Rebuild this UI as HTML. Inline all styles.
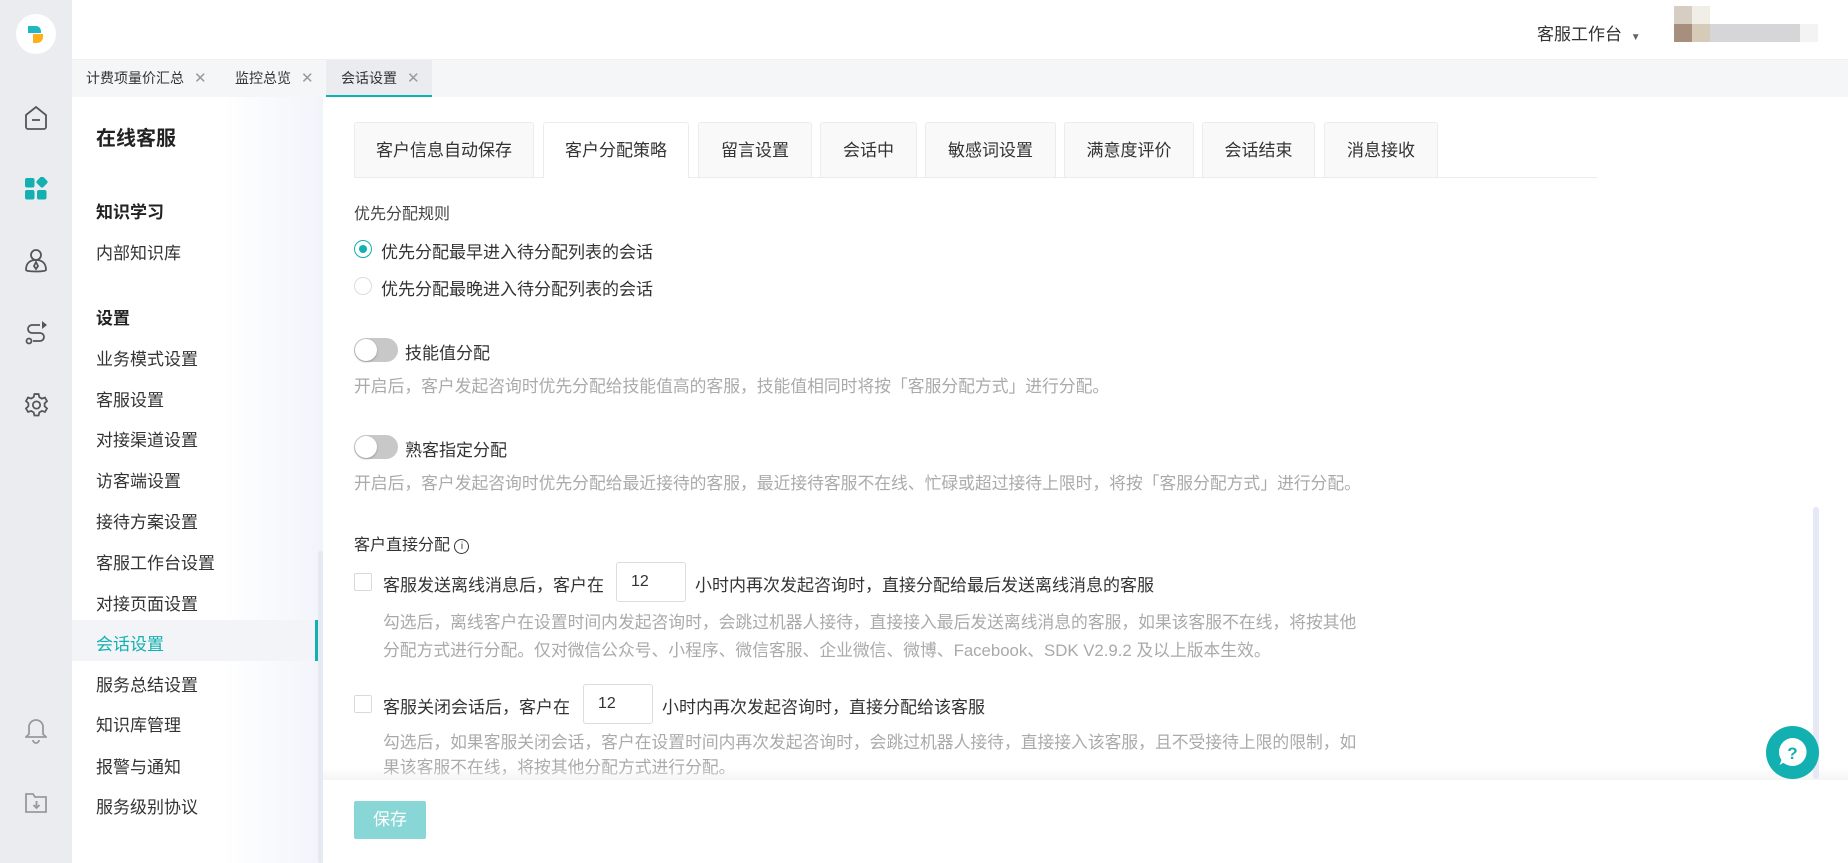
<!DOCTYPE html>
<html><head><meta charset="utf-8"><style>
*{margin:0;padding:0;box-sizing:border-box}
body{width:1848px;height:863px;overflow:hidden;position:relative;background:#fff;font-family:"Liberation Sans","Noto Sans CJK SC",sans-serif;color:#333;font-size:17px}
.abs{position:absolute}
.side{left:0;top:0;width:72px;height:863px;background:#ebecf0}
.logo{left:16px;top:14px;width:40px;height:40px;border-radius:50%;background:#fff}
.hdr{left:72px;top:0;width:1776px;height:60px;background:#fff;border-bottom:1px solid #eee}
.tabbar{left:72px;top:60px;width:1776px;height:37px;background:#f5f6f8}
.tb{position:absolute;top:0;height:37px;line-height:37px;font-size:14px;color:#333}
.tb .x{color:#999;margin-left:10px;font-size:15px}
.nav{left:72px;top:97px;width:251px;height:766px;background:linear-gradient(90deg,#fff 60%,#f2f4fb)}
.ni{position:absolute;left:24px;font-size:17px;color:#333;white-space:nowrap}
.nh{font-weight:bold;color:#222}
.ctab{position:absolute;top:122px;height:55px;line-height:55px;text-align:center;background:#f9f9f9;border:1px solid #ececec;border-bottom:none;border-radius:3px 3px 0 0;font-size:17px;color:#333}
.t{position:absolute;white-space:nowrap;font-size:17px}
.desc{color:#aaa;font-size:16.8px}
.tog{position:absolute;width:44px;height:24px;border-radius:12px;background:#c8c8c8}
.tog:after{content:"";position:absolute;left:1px;top:1px;width:22px;height:22px;border-radius:50%;background:#fff;box-shadow:0 1px 2px rgba(0,0,0,.25)}
.cb{position:absolute;width:18px;height:18px;border:1px solid #d9d9d9;border-radius:2px;background:#fff}
.inp{position:absolute;width:70px;height:40px;border:1px solid #dcdcdc;border-radius:3px;line-height:38px;padding-left:14px;font-size:16px}
</style></head><body>
<div class="abs side"></div>
<div class="abs logo"><svg width="40" height="40" viewBox="0 0 40 40"><path d="M12 12 h8 a5 5 0 0 1 5 5 v2 h-13z" fill="#1fb8c0"/><path d="M17 20 h10 v3 a6 6 0 0 1 -6 6 h-4z" fill="#fdb01a"/></svg></div>
<svg class="abs" style="left:24px;top:105px" width="24" height="26" viewBox="0 0 24 26" fill="none" stroke="#555" stroke-width="1.8"><path d="M2 10 L12 2 L22 10 V22 a2 2 0 0 1 -2 2 H4 a2 2 0 0 1 -2 -2z"/><path d="M8 15 h8"/></svg>
<svg class="abs" style="left:24px;top:177px" width="25" height="24" viewBox="0 0 25 24" fill="#12b0b0"><rect x="1" y="1" width="9.5" height="9.5" rx="2"/><rect x="13.5" y="0.5" width="9" height="9" rx="2" transform="rotate(45 18 5)"/><rect x="1" y="13" width="9.5" height="9.5" rx="2"/><rect x="13" y="13" width="9.5" height="9.5" rx="2"/></svg>
<svg class="abs" style="left:24px;top:248px" width="24" height="26" viewBox="0 0 24 26" fill="none" stroke="#555" stroke-width="1.8"><circle cx="12" cy="7" r="5"/><path d="M2 22 c0-7 4-10 10-10 s10 3 10 10 c0 2-20 2-20 0z"/><path d="M12 14 l-2 4 2 3 2-3z"/></svg>
<svg class="abs" style="left:24px;top:320px" width="24" height="26" viewBox="0 0 24 26" fill="none" stroke="#555" stroke-width="1.8"><path d="M16 5 H8 a4 4 0 0 0 0 8 h8 a4 4 0 0 1 0 8 H9"/><circle cx="5" cy="21" r="2.5"/><path d="M18 1 l5 4 -5 4z" fill="#555" stroke="none"/></svg>
<svg class="abs" style="left:24px;top:392px" width="25" height="26" viewBox="0 0 24 24" fill="none" stroke="#555" stroke-width="1.7"><circle cx="12" cy="12" r="3.5"/><path d="M10 1.5h4l.7 3 2.4 1.4 3-1 2 3.4-2.3 2.1v2.8l2.3 2.1-2 3.4-3-1-2.4 1.4-.7 3h-4l-.7-3-2.4-1.4-3 1-2-3.4 2.3-2.1V10.3L1.9 8.2l2-3.4 3 1 2.4-1.4z"/></svg>
<svg class="abs" style="left:25px;top:718px" width="22" height="26" viewBox="0 0 22 26" fill="none" stroke="#999" stroke-width="1.8"><path d="M11 2 a7 7 0 0 1 7 7 v7 l3 3 H1 l3-3 V9 a7 7 0 0 1 7-7z"/><path d="M8 22 a3 3 0 0 0 6 0"/></svg>
<svg class="abs" style="left:25px;top:792px" width="23" height="22" viewBox="0 0 23 22" fill="none" stroke="#999" stroke-width="1.8"><path d="M1 2 h7 l2 3 h11 v15 H1z"/><path d="M11.5 9 v7 M8.5 13 l3 3 3-3"/></svg>
<div class="abs hdr"></div>
<div class="t" style="left:1537px;top:20px;font-size:17px;color:#333">客服工作台 <span style="font-size:10px;color:#666;margin-left:4px">▼</span></div>
<div class="abs" style="left:1674px;top:6px;width:18px;height:18px;background:#d6cec2"></div>
<div class="abs" style="left:1692px;top:6px;width:18px;height:18px;background:#f1eee8"></div>
<div class="abs" style="left:1674px;top:24px;width:18px;height:18px;background:#a68f7c"></div>
<div class="abs" style="left:1692px;top:24px;width:18px;height:18px;background:#d6cbb8"></div>
<div class="abs" style="left:1710px;top:24px;width:90px;height:18px;background:#d6d6d8"></div>
<div class="abs" style="left:1800px;top:24px;width:18px;height:18px;background:#f3f3f3"></div>
<div class="abs tabbar"></div>
<div class="tb" style="left:86px;top:60px">计费项量价汇总<span class="x">✕</span></div>
<div class="tb" style="left:235px;top:60px">监控总览<span class="x">✕</span></div>
<div class="abs" style="left:326px;top:60px;width:106px;height:37px;background:#eaecf0;border-bottom:2px solid #12b0b0"></div>
<div class="tb" style="left:341px;top:60px">会话设置<span class="x">✕</span></div>
<div class="abs nav"></div>
<div class="abs" style="left:72px;top:620px;width:246px;height:41px;background:#f3f4f7;border-right:3px solid #12b0b0"></div>
<div class="abs" style="left:318px;top:551px;width:5px;height:312px;background:#e5e9f2;border-radius:2px"></div>
<div class="ni nh" style="left:96px;top:122px;font-size:20px">在线客服</div>
<div class="ni nh" style="left:96px;top:198px">知识学习</div>
<div class="ni" style="left:96px;top:239px">内部知识库</div>
<div class="ni nh" style="left:96px;top:304px">设置</div>
<div class="ni" style="left:96px;top:345px">业务模式设置</div>
<div class="ni" style="left:96px;top:386px">客服设置</div>
<div class="ni" style="left:96px;top:426px">对接渠道设置</div>
<div class="ni" style="left:96px;top:467px">访客端设置</div>
<div class="ni" style="left:96px;top:508px">接待方案设置</div>
<div class="ni" style="left:96px;top:549px">客服工作台设置</div>
<div class="ni" style="left:96px;top:590px">对接页面设置</div>
<div class="ni" style="left:96px;top:630px;color:#12b0b0">会话设置</div>
<div class="ni" style="left:96px;top:671px">服务总结设置</div>
<div class="ni" style="left:96px;top:711px">知识库管理</div>
<div class="ni" style="left:96px;top:753px">报警与通知</div>
<div class="ni" style="left:96px;top:793px">服务级别协议</div>
<div class="abs" style="left:354px;top:177px;width:1243px;height:1px;background:#ececec"></div>
<div class="ctab" style="left:354px;width:180px">客户信息自动保存</div>
<div class="ctab" style="left:543px;width:146px;background:#fff;height:56px">客户分配策略</div>
<div class="ctab" style="left:698px;width:114px">留言设置</div>
<div class="ctab" style="left:820px;width:97px">会话中</div>
<div class="ctab" style="left:925px;width:131px">敏感词设置</div>
<div class="ctab" style="left:1064px;width:130px">满意度评价</div>
<div class="ctab" style="left:1202px;width:113px">会话结束</div>
<div class="ctab" style="left:1324px;width:114px">消息接收</div>
<div class="t" style="left:354px;top:200px;font-size:16px;color:#444">优先分配规则</div>
<div class="abs" style="left:354px;top:240px;width:18px;height:18px;border:1px solid #12b0b0;border-radius:50%"><div style="position:absolute;left:4px;top:4px;width:8px;height:8px;border-radius:50%;background:#12b0b0"></div></div>
<div class="t" style="left:381px;top:238px">优先分配最早进入待分配列表的会话</div>
<div class="abs" style="left:354px;top:277px;width:18px;height:18px;border:1px solid #ddd;border-radius:50%"></div>
<div class="t" style="left:381px;top:275px">优先分配最晚进入待分配列表的会话</div>
<div class="tog" style="left:354px;top:338px"></div>
<div class="t" style="left:405px;top:339px">技能值分配</div>
<div class="t desc" style="left:354px;top:373px">开启后，客户发起咨询时优先分配给技能值高的客服，技能值相同时将按「客服分配方式」进行分配。</div>
<div class="tog" style="left:354px;top:435px"></div>
<div class="t" style="left:405px;top:436px">熟客指定分配</div>
<div class="t desc" style="left:354px;top:470px">开启后，客户发起咨询时优先分配给最近接待的客服，最近接待客服不在线、忙碌或超过接待上限时，将按「客服分配方式」进行分配。</div>
<div class="t" style="left:354px;top:531px;font-size:16px;color:#333">客户直接分配 <span style="display:inline-block;width:15px;height:15px;border:1px solid #333;border-radius:50%;font-size:10px;line-height:13px;text-align:center;vertical-align:1px">i</span></div>
<div class="cb" style="left:354px;top:573px"></div>
<div class="t" style="left:383px;top:571px">客服发送离线消息后，客户在</div>
<div class="inp" style="left:616px;top:562px">12</div>
<div class="t" style="left:695px;top:571px">小时内再次发起咨询时，直接分配给最后发送离线消息的客服</div>
<div class="t desc" style="left:383px;top:609px">勾选后，离线客户在设置时间内发起咨询时，会跳过机器人接待，直接接入最后发送离线消息的客服，如果该客服不在线，将按其他</div>
<div class="t desc" style="left:383px;top:637px">分配方式进行分配。仅对微信公众号、小程序、微信客服、企业微信、微博、Facebook、SDK V2.9.2 及以上版本生效。</div>
<div class="cb" style="left:354px;top:695px"></div>
<div class="t" style="left:383px;top:693px">客服关闭会话后，客户在</div>
<div class="inp" style="left:583px;top:684px">12</div>
<div class="t" style="left:662px;top:693px">小时内再次发起咨询时，直接分配给该客服</div>
<div class="t desc" style="left:383px;top:729px">勾选后，如果客服关闭会话，客户在设置时间内再次发起咨询时，会跳过机器人接待，直接接入该客服，且不受接待上限的限制，如</div>
<div class="t desc" style="left:383px;top:754px">果该客服不在线，将按其他分配方式进行分配。</div>
<div class="abs" style="left:323px;top:768px;width:1525px;height:12px;background:linear-gradient(rgba(245,245,245,0),rgba(240,240,240,.7))"></div>
<div class="abs" style="left:323px;top:780px;width:1525px;height:83px;background:#fff"></div>
<div class="abs" style="left:1813px;top:507px;width:6px;height:272px;background:#e5e9f5;border-radius:3px"></div>
<div class="abs" style="left:354px;top:801px;width:72px;height:38px;background:#88d6d6;border-radius:2px;color:#fff;font-size:17px;line-height:38px;text-align:center">保存</div>
<div class="abs" style="left:1766px;top:726px;width:53px;height:53px;border-radius:50%;background:#12b0b0"><svg width="53" height="53" viewBox="0 0 53 53"><path d="M26.5 12 a14 14 0 1 1 -9 24.7 l-4 2.3 2 -5 A14 14 0 0 1 26.5 12z" fill="#fff"/><text x="26.5" y="33" font-size="17" font-weight="bold" text-anchor="middle" fill="#12b0b0" font-family="Liberation Sans,sans-serif">?</text></svg></div>
</body></html>
